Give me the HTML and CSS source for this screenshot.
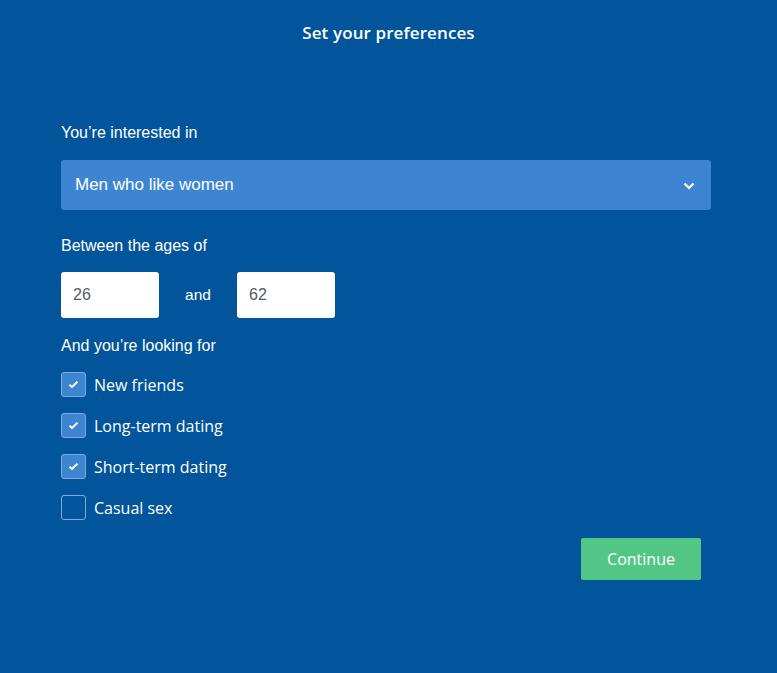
FILE: index.html
```html
<!DOCTYPE html>
<html>
<head>
<meta charset="utf-8">
<link rel="stylesheet" href="styles.css">
</head>
<body>
<div class="page">
  <h1 class="title">Set your preferences</h1>
  <form class="form">
    <div class="label first">You’re interested in</div>
    <div class="select">
      <span>Men who like women</span>
      <svg class="chev" width="12" height="8" viewBox="0 0 12 8"><path d="M1.5 1.5 L6 6 L10.5 1.5" fill="none" stroke="#fff" stroke-width="2.2"/></svg>
    </div>
    <div class="label ages-label">Between the ages of</div>
    <div class="ages">
      <div class="age">26</div>
      <span class="and">and</span>
      <div class="age">62</div>
    </div>
    <div class="label look-label">And you’re looking for</div>
    <div class="checks">
      <div class="check"><span class="box on"><svg width="11" height="9" viewBox="0 0 11 9"><path d="M1.5 4.8 L4 7 L9.5 1.8" fill="none" stroke="#fff" stroke-width="2"/></svg></span><span class="ctext">New friends</span></div>
      <div class="check"><span class="box on"><svg width="11" height="9" viewBox="0 0 11 9"><path d="M1.5 4.8 L4 7 L9.5 1.8" fill="none" stroke="#fff" stroke-width="2"/></svg></span><span class="ctext">Long-term dating</span></div>
      <div class="check"><span class="box on"><svg width="11" height="9" viewBox="0 0 11 9"><path d="M1.5 4.8 L4 7 L9.5 1.8" fill="none" stroke="#fff" stroke-width="2"/></svg></span><span class="ctext">Short-term dating</span></div>
      <div class="check"><span class="box"></span><span class="ctext">Casual sex</span></div>
    </div>
    <div class="actions">
      <div class="btn">Continue</div>
    </div>
  </form>
</div>
</body>
</html>
```
FILE: styles.css
```css
html, body {
  margin: 0;
  padding: 0;
  background: #02549b;
  height: 100%;
}
.page {
  width: 777px;
  height: 673px;
  background: #02549b;
  color: #fff;
  font-family: "Liberation Sans", Arial, sans-serif;
}
.title {
  margin: 0;
  padding-top: 21px;
  text-align: center;
  font-family: "Open Sans", sans-serif;
  font-weight: 600;
  font-size: 17px;
  line-height: 24px;
  letter-spacing: 0.1px;
}
.form {
  padding: 0 66px 0 61px;
}
.label {
  font-size: 16px;
  line-height: 20px;
}
.label.first {
  margin-top: 78px;
  margin-bottom: 17px;
}
.label.ages-label {
  margin-top: 26px;
  margin-bottom: 16px;
}
.label.look-label {
  margin-top: 18px;
  margin-bottom: 16px;
}
.select {
  height: 50px;
  background: #3e85d1;
  border-radius: 3px;
  display: flex;
  align-items: center;
  justify-content: space-between;
  padding: 0 16px 0 14px;
  font-size: 17px;
  box-sizing: border-box;
}
.chev { display: block; margin-top: 1px; }
.ages {
  display: flex;
  align-items: center;
}
.age {
  width: 98px;
  height: 46px;
  background: #fff;
  border-radius: 3px;
  box-sizing: border-box;
  padding-left: 12px;
  display: flex;
  align-items: center;
  color: #555a66;
  font-size: 16px;
}
.and {
  width: 78px;
  text-align: center;
  font-size: 15.5px;
}
.checks {
  display: flex;
  flex-direction: column;
  gap: 16px;
}
.check {
  display: flex;
  align-items: center;
  height: 25px;
}
.box {
  width: 25px;
  height: 25px;
  box-sizing: border-box;
  border: 1px solid #7fa9dd;
  border-radius: 3px;
  display: flex;
  align-items: center;
  justify-content: center;
}
.box.on {
  background: #3e85d1;
}
.ctext {
  margin-left: 8px;
  font-family: "Open Sans", sans-serif;
  font-size: 16px;
}
.actions {
  display: flex;
  justify-content: flex-end;
  margin-top: 18px;
  padding-right: 10px;
}
.btn {
  width: 120px;
  height: 42px;
  background: #52c785;
  border-radius: 2px;
  display: flex;
  align-items: center;
  justify-content: center;
  font-family: "Open Sans", sans-serif;
  font-size: 16px;
}
```
